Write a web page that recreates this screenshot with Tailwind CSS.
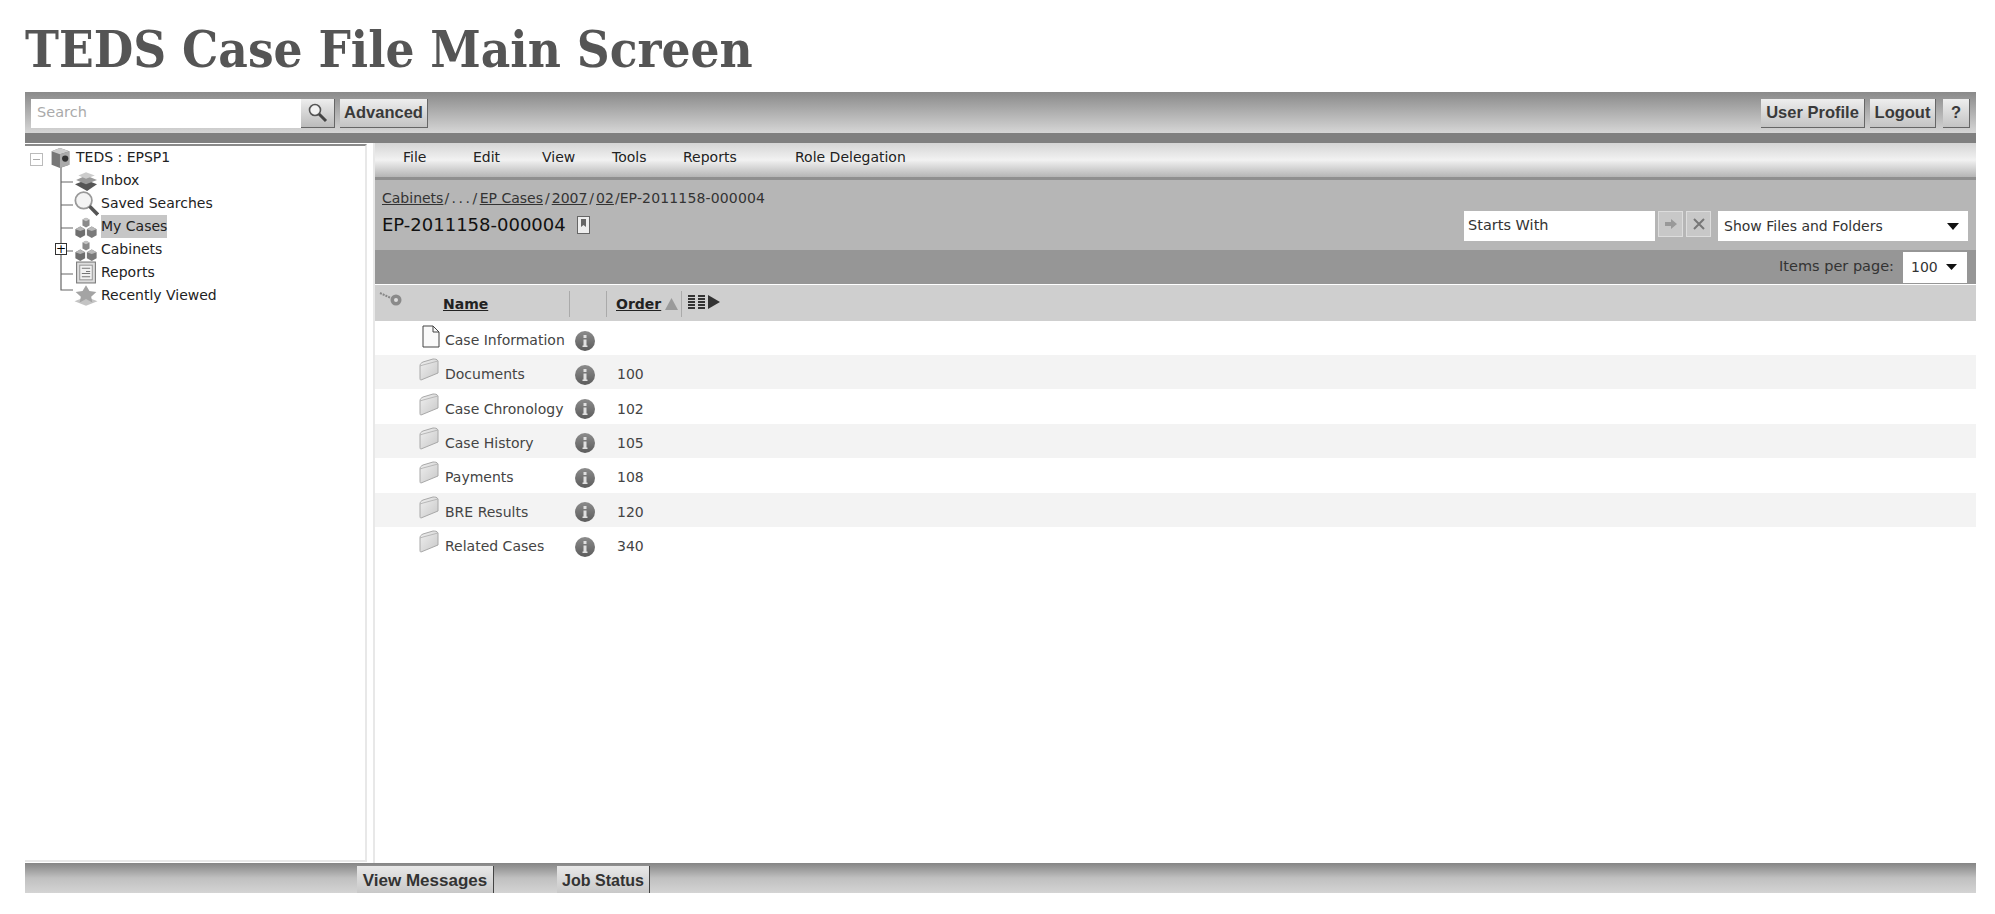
<!DOCTYPE html>
<html><head><meta charset="utf-8"><title>TEDS Case File Main Screen</title>
<script src="https://cdn.jsdelivr.net/npm/@tailwindcss/browser@4"></script></head>
<body class="bg-white w-[1995px] h-[914px] overflow-hidden font-['DejaVu_Sans',sans-serif] text-[14px] text-[#333]">
<svg width="0" height="0" class="absolute"><defs>
<linearGradient id="fold" x1="0" y1="0" x2="1" y2="1"><stop offset="0" stop-color="#f0f0f0"/><stop offset="1" stop-color="#c8c8c8"/></linearGradient>
<linearGradient id="inf" x1="0" y1="0" x2="0" y2="1"><stop offset="0" stop-color="#8c8c8c"/><stop offset="1" stop-color="#5c5c5c"/></linearGradient>
<symbol id="cubes" viewBox="0 0 26 26"><path d="M9 5l4-2 4 2v7l-4 2-4-2z" fill="#8a8a8a"/><path d="M9 5l4-2 4 2-4 2z" fill="#c4c4c4"/><path d="M1 16l5.500-3 5.500 3v7l-5.500 3L1 23z" fill="#6e6e6e"/><path d="M1 16l5.500-3 5.500 3-5.500 2z" fill="#b4b4b4"/><path d="M14 16l5.500-3 5.500 3v7l-5.500 3-5.500-3z" fill="#7a7a7a"/><path d="M14 16l5.500-3 5.500 3-5.500 2z" fill="#b8b8b8"/></symbol>
<symbol id="folder" viewBox="0 0 20 24"><path d="M1 8c0-2 1-3 3-4l10-3c2 0 4 0 5 2v12L2 22c-1 0-1-1-1-2z" fill="url(#fold)" stroke="#a8a8a8"/><path d="M1 8l3-1 15-4" fill="none" stroke="#b8b8b8"/></symbol>
<symbol id="info" viewBox="0 0 20 20"><circle cx="10" cy="10" r="10" fill="url(#inf)"/><rect x="8.500" y="8.500" width="3" height="7" fill="#e0e0e0"/><rect x="7.500" y="14.500" width="5" height="1.500" fill="#e0e0e0"/><rect x="8.500" y="4" width="3" height="3" fill="#e0e0e0"/></symbol>
</defs></svg>
<div class="pl-[25px] pr-[19px] flex flex-col h-full">
<h1 class="h-[92px] pt-[18px] font-['DejaVu_Serif_Condensed','DejaVu_Serif',serif] font-bold text-[50.700px] leading-[62px] text-[#555] whitespace-nowrap">TEDS Case File Main Screen</h1>

<header class="h-[51px] shrink-0 flex flex-col">
  <div class="h-[41px] flex items-center pl-[6px] pr-[6px] pt-[1px] bg-gradient-to-b from-[#8a8a8a] via-[#b0b0b0] to-[#d6d6d6] font-['Liberation_Sans',sans-serif] font-bold text-[16.500px] text-[#3a3a3a]">
    <div class="w-[270px] h-[29px] bg-white flex items-center pl-[6px] font-['DejaVu_Sans',sans-serif] font-normal text-[14.500px] text-[#aaa]">Search</div>
    <button class="w-[34px] h-[29px] flex items-center justify-center bg-gradient-to-b from-[#eee] to-[#bbb] border-r border-b border-[#666]"><svg width="22" height="22" viewBox="0 0 22 22"><circle cx="8" cy="8" r="5.500" fill="#f2f2f2" stroke="#555" stroke-width="1.600"/><path d="M12 12l7 7" stroke="#444" stroke-width="3"/></svg></button>
    <button class="ml-[5px] w-[88px] h-[29px] bg-gradient-to-b from-[#eee] to-[#c4c4c4] border-r border-b border-[#666]">Advanced</button>
    <div class="flex-1"></div>
    <button class="w-[104px] h-[29px] bg-gradient-to-b from-[#eee] to-[#c4c4c4] border-r border-b border-[#666]">User Profile</button>
    <button class="ml-[5px] w-[66px] h-[29px] bg-gradient-to-b from-[#eee] to-[#c4c4c4] border-r border-b border-[#666]">Logout</button>
    <button class="ml-[7px] w-[27px] h-[29px] bg-gradient-to-b from-[#eee] to-[#c4c4c4] border-r border-b border-[#666]">?</button>
  </div>
  <div class="h-[10px] bg-[#808080]"></div>
</header>

<div class="flex flex-1 min-h-0">
  <aside class="w-[342px] mt-[1px] mb-[1px] border-t-2 border-t-[#8a8a8a] border-r-2 border-b-2 border-[#e8e8e8] pl-[6px] relative">
    <svg class="absolute left-0 top-[3px]" width="70" height="150" viewBox="0 0 70 150" fill="none">
      <path d="M36 18V141H48M36 33H48M36 56H48M36 79H48M36 102H48M36 125H48" stroke="#666" stroke-width="1.200"/>
      <rect x="5.500" y="4.500" width="12" height="12" fill="#fff" stroke="#bbb"/><path d="M8 10.500H15" stroke="#aaa"/>
    </svg>
    <div class="flex flex-col relative">
      <div class="h-[23px] flex items-center pl-[18px] gap-[3px]"><svg width="24" height="23" viewBox="0 0 22 22"><path d="M2 5l8-3 9 3v13l-9 3-8-3z" fill="#777"/><path d="M2 5l8 3 9-3-9-3z" fill="#ccc"/><path d="M10 8l9-3v13l-9 3z" fill="#aaa"/><circle cx="15" cy="12" r="3" fill="#333"/></svg><span class="text-[#222]">TEDS : EPSP1</span></div>
      <div class="h-[23px] flex items-center pl-[42px] gap-[2px]"><svg width="26" height="22" viewBox="0 0 22 20"><path d="M1 13l10-4 10 4-9 6z" fill="#555"/><path d="M2 9l9-4 10 4-10 4z" fill="#999"/><path d="M4 5l7-3 8 3-8 3z" fill="#ccc"/></svg><span class="text-[#222]">Inbox</span></div>
      <div class="h-[23px] flex items-center pl-[42px] gap-[2px]"><svg width="26" height="26" viewBox="0 0 22 22"><circle cx="9" cy="8" r="7" fill="#f4f4f4" stroke="#999" stroke-width="1.500"/><path d="M14 13l7 7" stroke="#555" stroke-width="3"/></svg><span class="text-[#222]">Saved Searches</span></div>
      <div class="h-[23px] flex items-center pl-[42px] gap-[2px]"><svg width="26" height="23"><use href="#cubes"/></svg><span class="bg-[#c6c6c6] h-[23px] leading-[23px] text-[#222]">My Cases</span></div>
      <div class="h-[23px] flex items-center pl-[42px] gap-[2px] relative"><span class="absolute left-[24px] top-[5px] w-[12px] h-[12px] bg-white border border-[#333] flex items-center justify-center text-[12px] leading-none text-black">+</span><svg width="26" height="23"><use href="#cubes"/></svg><span class="text-[#222]">Cabinets</span></div>
      <div class="h-[23px] flex items-center pl-[42px] gap-[2px]"><svg width="26" height="23" viewBox="0 0 22 22"><rect x="2" y="1" width="18" height="20" fill="#ddd" stroke="#777"/><rect x="5" y="4" width="12" height="14" fill="#f2f2f2" stroke="#999"/><path d="M7 7h8M11 10h4M7 12h8M7 15h8" stroke="#777"/></svg><span class="text-[#222]">Reports</span></div>
      <div class="h-[23px] flex items-center pl-[42px] gap-[2px]"><svg width="26" height="23" viewBox="0 0 22 20"><path d="M1 15l10-4 10 4-10 4z" fill="#c4c4c4"/><path d="M11 1l3 5 6 1-4.500 4 1 5-5.500-3-5.500 3 1-5L2 7l6-1z" fill="#a4a4a4"/></svg><span class="text-[#222]">Recently Viewed</span></div>
    </div>
  </aside>
  <div class="w-[8px] border-r-2 border-[#e8e8e8] bg-white"></div>
  <main class="flex-1 flex flex-col min-w-0">
    <nav class="h-[34px] flex items-center pb-[5px] pl-[28px] bg-gradient-to-b from-[#d5d5d5] via-[#f2f2f2] to-[#b5b5b5] text-[#222]">
      <span class="w-[70px]">File</span><span class="w-[69px]">Edit</span><span class="w-[70px]">View</span><span class="w-[71px]">Tools</span><span class="w-[112px]">Reports</span><span>Role Delegation</span>
    </nav>
    <section class="h-[73px] bg-[#b6b6b6] flex justify-between pl-[7px] pr-[8px] pt-[10px] border-t-[3px] border-[#8f8f8f]">
      <div>
        <div class="text-[14px] leading-[16px] text-[#333] whitespace-nowrap"><span class="underline">Cabinets</span><span class="tracking-[2.500px] pl-[1px]">/.../</span><span class="underline">EP Cases</span><span class="px-[2px]">/</span><span class="underline">2007</span><span class="px-[2px]">/</span><span class="underline">02</span><span class="pl-[1px]">/</span><span class="tracking-[0.150px]">EP-2011158-000004</span></div>
        <div class="mt-[7px] flex items-center gap-[11px] text-[18px] leading-[24px] font-medium text-[#111]">EP-2011158-000004 <svg width="13" height="18" viewBox="0 0 13 18"><rect x="0.500" y="0.500" width="12" height="17" fill="#eee" stroke="#666"/><path d="M4 3v8l2.500-2L9 11V3z" fill="#666"/></svg></div>
      </div>
      <div class="flex items-start gap-[3px] pt-[21px]">
        <div class="w-[191px] h-[30px] bg-white flex items-center pl-[4px] text-[#333] text-[14.500px]">Starts With</div>
        <button class="w-[25px] h-[26px] bg-[#c8c8c8] border border-[#ddd] flex items-center justify-center"><svg width="14" height="12" viewBox="0 0 14 12"><path d="M1 4h6V1l6 5-6 5V8H1z" fill="#999"/></svg></button>
        <button class="w-[25px] h-[26px] bg-[#c8c8c8] border border-[#ddd] flex items-center justify-center"><svg width="12" height="12" viewBox="0 0 12 12"><path d="M1 1l10 10M11 1L1 11" stroke="#777" stroke-width="2"/></svg></button>
        <div class="ml-[4px] w-[250px] h-[30px] bg-white flex items-center justify-between pl-[6px] pr-[9px] text-[#333]">Show Files and Folders <svg width="12" height="7" viewBox="0 0 12 7"><path d="M0 0h12L6 7z" fill="#111"/></svg></div>
      </div>
    </section>
    <section class="h-[34px] bg-[#969696] flex items-center justify-end pr-[9px] gap-[9px] text-[#333]"><span class="text-[14.500px]">Items per page:</span><div class="w-[64px] h-[31px] bg-white flex items-center justify-between pl-[8px] pr-[10px]">100 <svg width="11" height="6" viewBox="0 0 11 6"><path d="M0 0h11L5.500 6z" fill="#111"/></svg></div></section>
    <div class="h-[36px] mt-[1px] bg-[#cfcfcf] flex items-center pt-[2px] font-bold text-[#222] relative">
      <svg class="ml-[4px] -mt-[8px] shrink-0" width="24" height="20" viewBox="0 0 24 20"><path d="M1 3l11 5" stroke="#888" stroke-width="2" stroke-dasharray="2 1"/><circle cx="17" cy="10" r="5.500" fill="#8a8a8a"/><circle cx="17" cy="10" r="2" fill="#ddd"/></svg>
      <span class="ml-[40px] underline w-[126px]">Name</span>
      <span class="w-px h-[26px] bg-[#aaa]"></span>
      <span class="w-[36px]"></span>
      <span class="w-px h-[26px] bg-[#aaa]"></span>
      <span class="ml-[9px] underline">Order</span>
      <svg class="ml-[4px]" width="13" height="12" viewBox="0 0 13 12"><path d="M0 12L6.500 0 13 12z" fill="#9a9a9a"/></svg>
      <span class="ml-[3px] w-px h-[26px] bg-[#aaa]"></span>
      <svg class="ml-[6px] -mt-[4px]" width="18" height="16" viewBox="0 0 18 16"><path d="M0 2h7M0 5h7M0 8h7M0 11h7M0 14h7M10 2h7M10 5h7M10 8h7M10 11h7M10 14h7" stroke="#333" stroke-width="2"/></svg>
      <svg class="ml-[2px] -mt-[4px]" width="12" height="14" viewBox="0 0 12 14"><path d="M0 0l12 7-12 7z" fill="#333"/></svg>
    </div>
    <div class="text-[#444]">
      <div class="h-[34px] flex items-center pt-[5px]"><svg class="ml-[47px] -mt-[9px] shrink-0" width="18" height="23" viewBox="0 0 18 23"><path d="M1 1h10l6 6v15H1z" fill="#fafafa" stroke="#444"/><path d="M11 1v6h6" fill="none" stroke="#444"/></svg><span class="ml-[5px] w-[130px] whitespace-nowrap">Case Information</span><svg width="20" height="20"><use href="#info"/></svg></div>
      <div class="h-[34.400px] flex items-center pt-[5px] bg-[#f3f3f3]"><svg class="ml-[44px] -mt-[9px] shrink-0" width="20" height="24"><use href="#folder"/></svg><span class="ml-[6px] w-[130px]">Documents</span><svg width="20" height="20"><use href="#info"/></svg><span class="ml-[22px]">100</span></div>
      <div class="h-[34.400px] flex items-center pt-[5px]"><svg class="ml-[44px] -mt-[9px] shrink-0" width="20" height="24"><use href="#folder"/></svg><span class="ml-[6px] w-[130px] whitespace-nowrap">Case Chronology</span><svg width="20" height="20"><use href="#info"/></svg><span class="ml-[22px]">102</span></div>
      <div class="h-[34.400px] flex items-center pt-[5px] bg-[#f3f3f3]"><svg class="ml-[44px] -mt-[9px] shrink-0" width="20" height="24"><use href="#folder"/></svg><span class="ml-[6px] w-[130px]">Case History</span><svg width="20" height="20"><use href="#info"/></svg><span class="ml-[22px]">105</span></div>
      <div class="h-[34.400px] flex items-center pt-[5px]"><svg class="ml-[44px] -mt-[9px] shrink-0" width="20" height="24"><use href="#folder"/></svg><span class="ml-[6px] w-[130px]">Payments</span><svg width="20" height="20"><use href="#info"/></svg><span class="ml-[22px]">108</span></div>
      <div class="h-[34.400px] flex items-center pt-[5px] bg-[#f3f3f3]"><svg class="ml-[44px] -mt-[9px] shrink-0" width="20" height="24"><use href="#folder"/></svg><span class="ml-[6px] w-[130px]">BRE Results</span><svg width="20" height="20"><use href="#info"/></svg><span class="ml-[22px]">120</span></div>
      <div class="h-[34.400px] flex items-center pt-[5px]"><svg class="ml-[44px] -mt-[9px] shrink-0" width="20" height="24"><use href="#folder"/></svg><span class="ml-[6px] w-[130px]">Related Cases</span><svg width="20" height="20"><use href="#info"/></svg><span class="ml-[22px]">340</span></div>
    </div>
  </main>
</div>

<footer class="h-[30px] mb-[21px] shrink-0 flex items-end bg-gradient-to-b from-[#858585] via-[#c0c0c0] to-[#d4d4d4] font-['Liberation_Sans',sans-serif] font-bold text-[#333]">
  <button class="ml-[332px] w-[137px] h-[27px] pt-[2px] text-[17px] bg-gradient-to-b from-[#e8e8e8] to-[#c8c8c8] border-r border-[#444]">View Messages</button>
  <button class="ml-[63px] w-[93px] h-[27px] pt-[2px] text-[16px] bg-gradient-to-b from-[#e8e8e8] to-[#c8c8c8] border-r border-[#444]">Job Status</button>
</footer>
</div>
</body></html>
